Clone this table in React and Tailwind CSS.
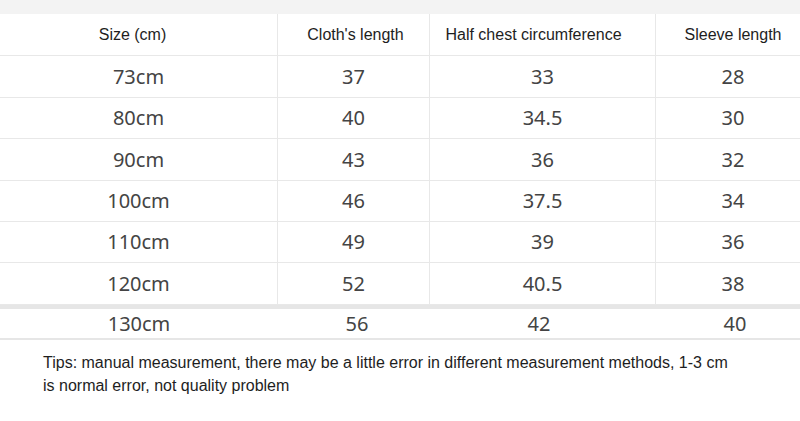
import React from "react";

const rows = [
  ["73cm", "37", "33", "28", "h-[42px]"],
  ["80cm", "40", "34.5", "30", "h-[41px]"],
  ["90cm", "43", "36", "32", "h-[42px]"],
  ["100cm", "46", "37.5", "34", "h-[41px]"],
  ["110cm", "49", "39", "36", "h-[41px]"],
  ["120cm", "52", "40.5", "38", "h-[42px]"],
];

const dataFont = { fontFamily: '"Noto Sans", "Open Sans", sans-serif' };

export default function App() {
  return (
    <div className="w-[800px] h-[421px] bg-white overflow-hidden relative">
      <div className="h-[14px] bg-[#f3f3f3]" />
      <div className="w-[810px] font-['Liberation_Sans',Arial,sans-serif]">
        <div className="flex h-[42px] border-b border-[#e8e8e8] text-[16px] text-[#1e1e1e] items-stretch">
          <div className="w-[278px] border-r border-[#e8e8e8] flex items-center justify-center pr-[12px]">Size (cm)</div>
          <div className="w-[152px] border-r border-[#e8e8e8] flex items-center justify-center pl-[4px]">Cloth's length</div>
          <div className="w-[226px] border-r border-[#e8e8e8] flex items-center justify-center pr-[18px]">Half chest circumference</div>
          <div className="w-[154px] flex items-center justify-center">Sleeve length</div>
        </div>
        {rows.map((r) => (
          <div key={r[0]} className={`flex ${r[4]} border-b border-[#e8e8e8] text-[20px] text-[#444]`} style={dataFont}>
            <div className="w-[278px] border-r border-[#e8e8e8] flex items-center justify-center">{r[0]}</div>
            <div className="w-[152px] border-r border-[#e8e8e8] flex items-center justify-center">{r[1]}</div>
            <div className="w-[226px] border-r border-[#e8e8e8] flex items-center justify-center">{r[2]}</div>
            <div className="w-[154px] flex items-center justify-center">{r[3]}</div>
          </div>
        ))}
        <div className="h-[4px] bg-[#e6e6e6]" />
        <div className="flex h-[31px] border-b-2 border-[#e6e6e6] text-[20px] text-[#444]" style={dataFont}>
          <div className="w-[278px] flex items-center justify-center">130cm</div>
          <div className="w-[152px] flex items-center justify-center pl-[6px]">56</div>
          <div className="w-[226px] flex items-center justify-center pr-[8px]">42</div>
          <div className="w-[154px] flex items-center justify-center pl-[4px]">40</div>
        </div>
        <div className="pl-[43px] pt-[11px] text-[16px] leading-[23px] text-[#1e1e1e]">
          Tips: manual measurement, there may be a little error in different measurement methods, 1-3 cm
          <br />
          is normal error, not quality problem
        </div>
      </div>
    </div>
  );
}
